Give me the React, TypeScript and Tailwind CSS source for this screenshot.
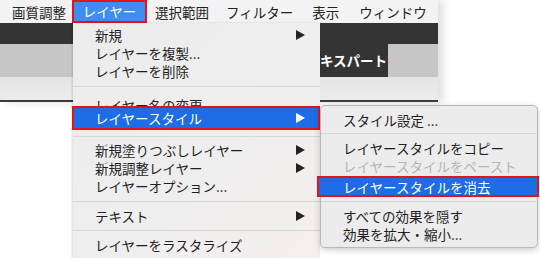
import React from "react";

const font = { fontFamily: '"Noto Sans CJK JP", "Noto Sans", sans-serif' };

function Arrow({ white = false }: { white?: boolean }) {
  return (
    <svg width="9" height="10" viewBox="0 0 9 10" className="shrink-0">
      <polygon points="0,0 9,5 0,10" fill={white ? "#ffffff" : "#222222"} />
    </svg>
  );
}

function Item({ label, arrow = false, disabled = false }: { label: string; arrow?: boolean; disabled?: boolean }) {
  return (
    <div className="flex h-[18px] items-center justify-between whitespace-nowrap pl-[22px] pr-[15px]">
      <span className={`text-[13.5px] leading-[18px] ${disabled ? "text-[#b4b4b4]" : "text-[#1e1e1e]"}`}>{label}</span>
      {arrow && <Arrow />}
    </div>
  );
}

function Sep({ h, top }: { h: string; top: string }) {
  return (
    <div className={`${h} flex flex-col`}>
      <div className={top} />
      <div className="h-px bg-[#d6d6d6]" />
    </div>
  );
}

export default function App() {
  return (
    <div className="relative h-[258px] w-[540px] overflow-hidden bg-white" style={font}>
      {/* Background application chrome */}
      <div className="flex w-[438px] flex-col shadow-[6px_0_8px_rgba(0,0,0,0.12)]">
        <div className="flex h-[23px] items-center whitespace-nowrap bg-[#f3f3f3] text-[13.5px] text-[#222]">
          <div className="w-[72px] pl-[12px] leading-[22px]">画質調整</div>
          <div className="flex h-[23px] w-[75px] items-center justify-center border-2 border-[#e0141c] bg-[#3d8ef2] text-white">
            レイヤー
          </div>
          <div className="ml-[8px] flex leading-[22px]">
            <span>選択範囲</span>
            <span className="ml-[17px]">フィルター</span>
            <span className="ml-[19px]">表示</span>
            <span className="ml-[20px]">ウィンドウ</span>
          </div>
        </div>
        <div className="h-[21px] bg-[#343434]" />
        <div className="flex h-[33px] bg-[#c6c6c6]">
          <div className="w-[320px]" />
          <div className="-mt-[21px] flex h-[54px] w-[68px] items-end overflow-hidden whitespace-nowrap bg-[#343434] pb-[8px]">
            <span className="text-[13.5px] font-bold leading-[18px] text-white">キスパート</span>
          </div>
          <div className="flex-1" />
        </div>
        <div className="h-[23px] bg-gradient-to-b from-[#e4e4e4] to-[#ececec]" />
        <div className="h-[2px] bg-[#3a3a3a]" />
      </div>

      {/* Main menu */}
      <div className="absolute left-[73px] top-[23px] w-[247px] bg-gradient-to-br from-[#ececec] via-[#eeeeee] to-[#f5eeee] pt-[3px] shadow-[-1px_0_2px_rgba(0,0,0,0.15)]">
        <Item label="新規" arrow />
        <Item label="レイヤーを複製..." />
        <Item label="レイヤーを削除" />
        <Sep h="h-[12px]" top="h-[6px]" />
        <div className="h-[14px] overflow-hidden whitespace-nowrap pl-[22px]">
          <span className="text-[13.5px] leading-[18px] text-[#1e1e1e]">レイヤー名の変更...</span>
        </div>
        <div className="-ml-px flex h-[24px] items-center justify-between whitespace-nowrap border-2 border-[#e0141c] bg-[#1c6de6] pl-[21px] pr-[13px]">
          <span className="text-[13.5px] leading-[18px] text-white">レイヤースタイル</span>
          <Arrow white />
        </div>
        <Sep h="h-[11px]" top="h-[6px]" />
        <Item label="新規塗りつぶしレイヤー" arrow />
        <Item label="新規調整レイヤー" arrow />
        <Item label="レイヤーオプション..." />
        <Sep h="h-[12px]" top="h-[6px]" />
        <Item label="テキスト" arrow />
        <Sep h="h-[11px]" top="h-[5px]" />
        <Item label="レイヤーをラスタライズ" />
        <div className="h-[10px]" />
      </div>

      {/* Submenu */}
      <div className="absolute left-[320px] top-[105px] w-[218px] rounded-[5px] border border-[#b8b8b8] bg-[#ececec] pb-[4px] pt-[5px] shadow-[0_2px_6px_rgba(0,0,0,0.2)]">
        <Item label="スタイル設定 ..." />
        <Sep h="h-[10px]" top="h-[4px]" />
        <Item label="レイヤースタイルをコピー" />
        <Item label="レイヤースタイルをペースト" disabled />
        <div className="-ml-[4px] -mr-[2px] mt-px flex h-[21px] items-center whitespace-nowrap border-2 border-[#e0141c] bg-[#1c6de6] pl-[24px]">
          <span className="text-[13.5px] leading-[18px] text-white">レイヤースタイルを消去</span>
        </div>
        <Sep h="h-[10px]" top="h-[4px]" />
        <Item label="すべての効果を隠す" />
        <Item label="効果を拡大・縮小..." />
      </div>
    </div>
  );
}
